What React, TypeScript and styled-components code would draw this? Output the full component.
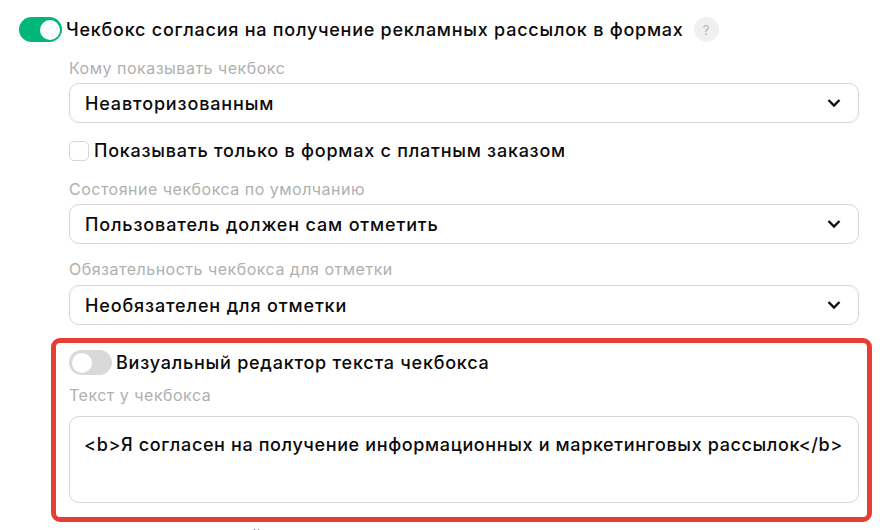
import React from 'react'
import styled, { createGlobalStyle } from 'styled-components'

const Global = createGlobalStyle`
  html, body { margin: 0; padding: 0; background: #fff; overflow: hidden; }
  body { font-family: "Inter", "Liberation Sans", sans-serif; color: #0b0b0b; }
`

const Page = styled.div`
  width: 889px;
  height: 530px;
  overflow: hidden;
  box-sizing: border-box;
  padding: 17px 30px 0 19px;
`

const Row = styled.div`
  display: flex;
  align-items: center;
  gap: 4px;
`

const Title = styled.span`
  font-size: 18px;
  font-weight: 500;
  line-height: 24px;
  letter-spacing: 0.76px;
  white-space: nowrap;
`

const Toggle = styled.div<{ $on?: boolean }>`
  width: 43px;
  height: 25px;
  flex: none;
  border-radius: 13px;
  background: ${p => (p.$on ? '#00b67a' : '#d9d9d9')};
  display: flex;
  align-items: center;
  justify-content: ${p => (p.$on ? 'flex-end' : 'flex-start')};
  padding: 0 2px 0 3px;
  box-sizing: border-box;

  &::after {
    content: '';
    width: 20px;
    height: 20px;
    border-radius: 50%;
    background: #fff;
  }
`

const Help = styled.span`
  width: 25px;
  height: 25px;
  margin-left: 6px;
  border-radius: 50%;
  background: #f0f0f0;
  color: #b5b5b5;
  font-size: 13px;
  display: flex;
  align-items: center;
  justify-content: center;
`

const Group = styled.div`
  margin-left: 50px;
`

const Label = styled.div<{ $tight?: boolean }>`
  margin: ${p => (p.$tight ? '14px 0 5px' : '15px 0 4px')};
  font-size: 16px;
  line-height: 22px;
  letter-spacing: 0.5px;
  color: #b0b0b0;
`

const Select = styled.div`
  height: 40px;
  box-sizing: border-box;
  border: 1px solid #d6d6d6;
  border-radius: 10px;
  padding: 0 17px 0 15px;
  display: flex;
  align-items: center;
  justify-content: space-between;
  font-size: 18px;
  font-weight: 500;
  letter-spacing: 0.85px;
`

const Chevron = () => (
  <svg width="14" height="10" viewBox="0 0 14 10" fill="none">
    <path d="M1.5 2 L7 7.5 L12.5 2" stroke="#111" strokeWidth="2.4" />
  </svg>
)

const CheckRow = styled(Row)`
  height: 24px;
  margin-top: 16px;
  gap: 5px;
`

const Box = styled.span`
  width: 20px;
  height: 20px;
  flex: none;
  box-sizing: border-box;
  border: 1px solid #d6d6d6;
  border-radius: 5px;
`

const Highlight = styled.div`
  margin: 13px 0 0 -18px;
  width: 821px;
  height: 184px;
  box-sizing: border-box;
  border: 5px solid #e63e33;
  border-radius: 9px;
  padding: 7px 8px 0 13px;
`

const TextLabel = styled(Label)`
  margin: 9px 0 10px;
`

const TextBox = styled.div`
  height: 87px;
  box-sizing: border-box;
  border: 1px solid #d6d6d6;
  border-radius: 10px;
  padding: 16px 14px;
  font-size: 18px;
  font-weight: 500;
  line-height: 24px;
  letter-spacing: 0.63px;
  white-space: nowrap;
`

const Cut = styled(Title)`
  display: block;
  margin: 3px 0 0 182px;
`

const Options = [
  { label: 'Кому показывать чекбокс', value: 'Неавторизованным' },
  { label: 'Состояние чекбокса по умолчанию', value: 'Пользователь должен сам отметить' },
  { label: 'Обязательность чекбокса для отметки', value: 'Необязателен для отметки' },
]

export default function App() {
  return (
    <Page>
      <Global />
      <Row>
        <Toggle $on />
        <Title>Чекбокс согласия на получение рекламных рассылок в формах</Title>
        <Help>?</Help>
      </Row>
      <Group>
        <Label>{Options[0].label}</Label>
        <Select>
          {Options[0].value}
          <Chevron />
        </Select>
        <CheckRow>
          <Box />
          <Title>Показывать только в формах с платным заказом</Title>
        </CheckRow>
        <Label>{Options[1].label}</Label>
        <Select>
          {Options[1].value}
          <Chevron />
        </Select>
        <Label $tight>{Options[2].label}</Label>
        <Select>
          {Options[2].value}
          <Chevron />
        </Select>
        <Highlight>
          <Row>
            <Toggle />
            <Title>Визуальный редактор текста чекбокса</Title>
          </Row>
          <TextLabel>Текст у чекбокса</TextLabel>
          <TextBox>{'<b>Я согласен на получение информационных и маркетинговых рассылок</b>'}</TextBox>
        </Highlight>
        <Cut>й</Cut>
      </Group>
    </Page>
  )
}
